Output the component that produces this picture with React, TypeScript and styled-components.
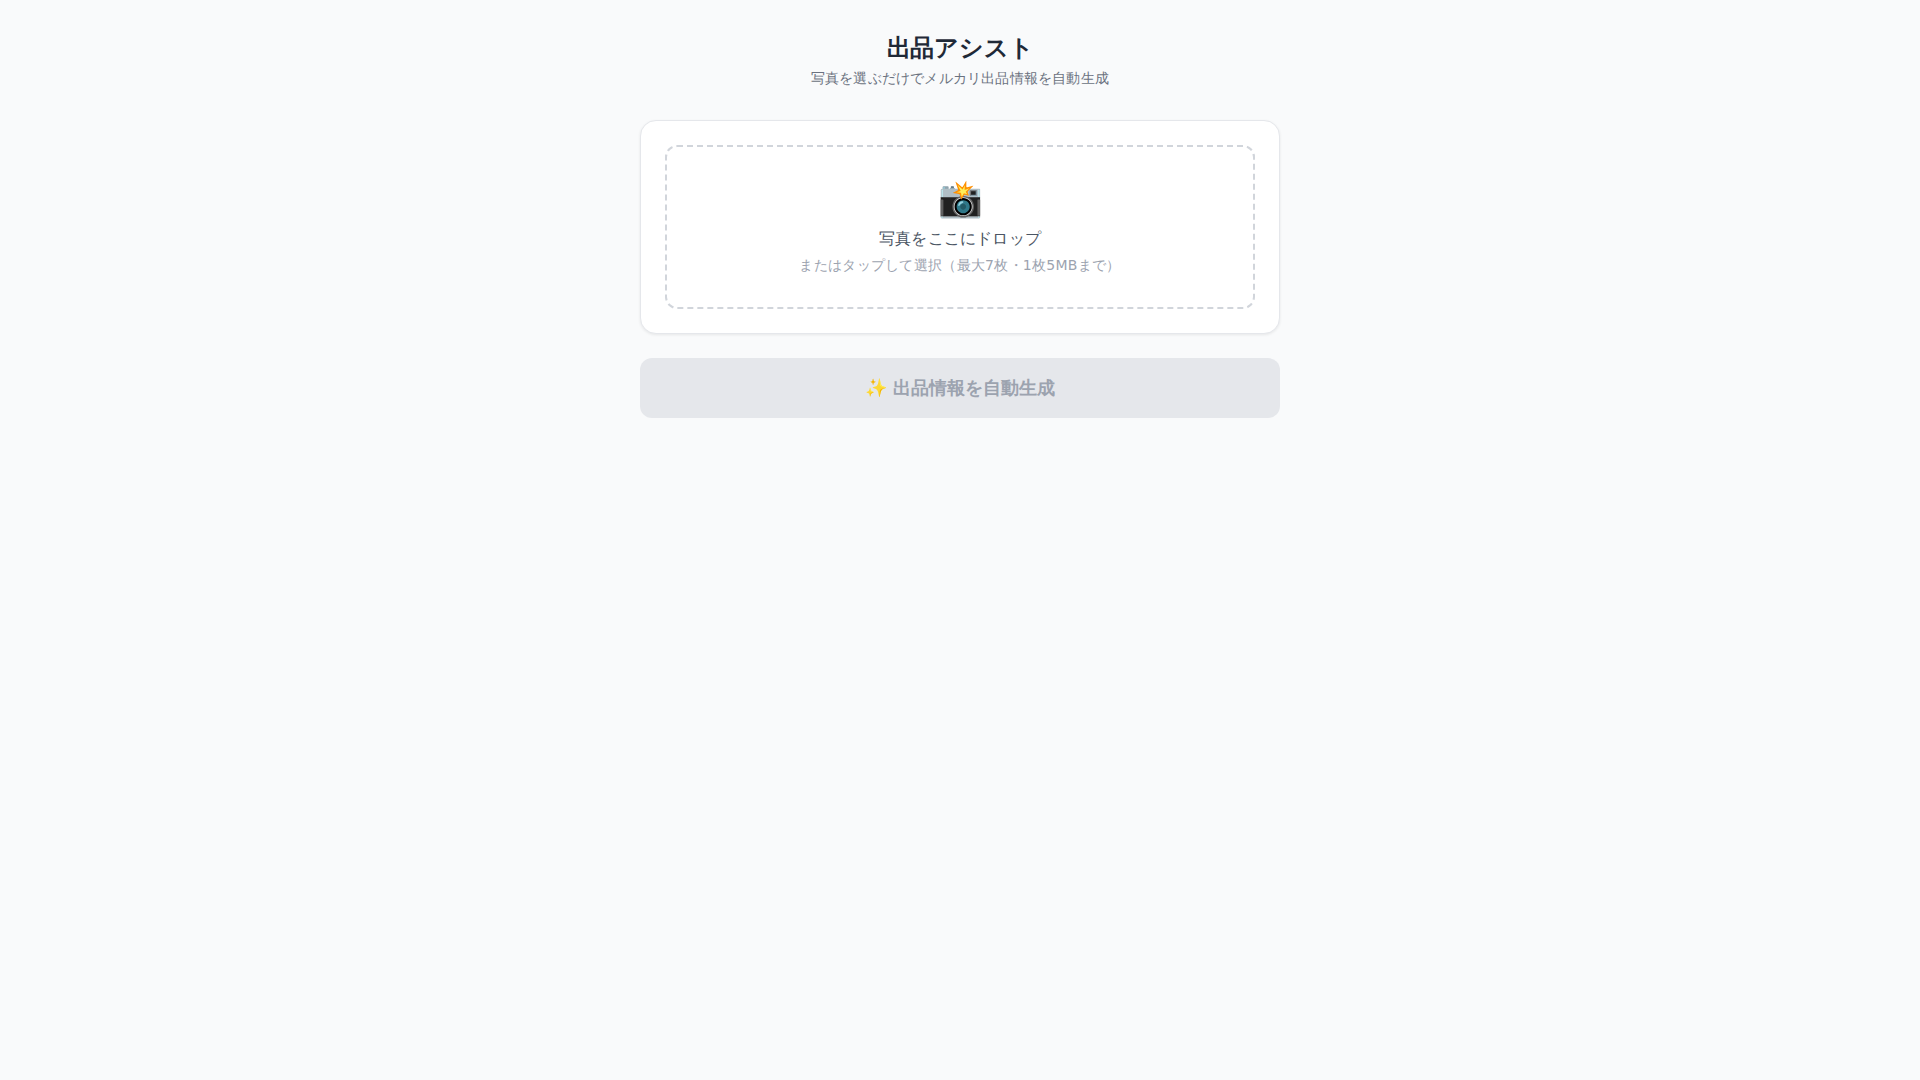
import React from 'react';
import styled, { createGlobalStyle } from 'styled-components';

const GlobalStyle = createGlobalStyle`
  * { box-sizing: border-box; }
  body {
    margin: 0;
    background: #f9fafb;
    color: #1f2937;
    font-family: "DejaVu Sans", sans-serif;
    letter-spacing: 0.2px;
  }
`;

const Page = styled.main`
  width: 640px;
  margin: 0 auto;
  padding: 32px 0;
`;

const Header = styled.header`
  text-align: center;
  margin-bottom: 32px;
`;

const Title = styled.h1`
  margin: 0 0 4px;
  font-size: 24px;
  line-height: 32px;
  font-weight: 700;
  letter-spacing: -0.2px;
  color: #1f2937;
`;

const Subtitle = styled.p`
  margin: 0;
  font-size: 14px;
  line-height: 20px;
  color: #6b7280;
`;

const Card = styled.section`
  background: #fff;
  border: 1px solid #e5e7eb;
  border-radius: 16px;
  box-shadow: 0 1px 3px rgba(0, 0, 0, 0.08);
  padding: 24px;
  margin-bottom: 24px;
`;

const DropZone = styled.div`
  border: 2px dashed #d1d5db;
  border-radius: 12px;
  padding: 32px 24px;
  text-align: center;
  cursor: pointer;
`;

const DropIcon = styled.div`
  font-size: 36px;
  line-height: 40px;
  letter-spacing: normal;
  margin-bottom: 8px;
`;

const DropTitle = styled.p`
  margin: 0 0 4px;
  font-size: 16px;
  line-height: 24px;
  color: #4b5563;
`;

const DropHint = styled.p`
  margin: 0;
  font-size: 14px;
  line-height: 20px;
  letter-spacing: 0.28px;
  color: #9ca3af;
`;

const GenerateButton = styled.button`
  display: block;
  width: 100%;
  height: 60px;
  border: none;
  border-radius: 12px;
  background: #e5e7eb;
  color: #9ca3af;
  font-family: inherit;
  font-size: 18px;
  font-weight: 700;
  letter-spacing: normal;
`;

export default function App() {
  return (
    <>
      <GlobalStyle />
      <Page>
        <Header>
          <Title>出品アシスト</Title>
          <Subtitle>写真を選ぶだけでメルカリ出品情報を自動生成</Subtitle>
        </Header>
        <Card>
          <DropZone>
            <DropIcon>📸</DropIcon>
            <DropTitle>写真をここにドロップ</DropTitle>
            <DropHint>またはタップして選択（最大7枚・1枚5MBまで）</DropHint>
          </DropZone>
        </Card>
        <GenerateButton disabled>✨ 出品情報を自動生成</GenerateButton>
      </Page>
    </>
  );
}
